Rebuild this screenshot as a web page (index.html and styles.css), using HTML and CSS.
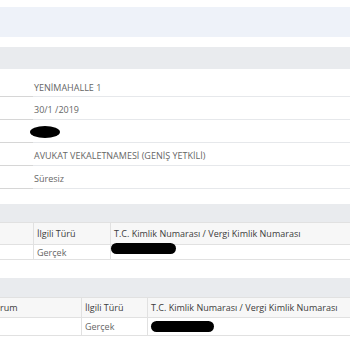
FILE: index.html
```html
<!DOCTYPE html>
<html lang="tr">
<head>
<meta charset="utf-8">
<link rel="stylesheet" href="styles.css">
</head>
<body>
<div class="page">
  <div class="band-blue"></div>
  <div class="band-gray band-first"></div>
  <table class="details">
    <tr class="first"><td class="label"></td><td class="value">YENİMAHALLE 1</td></tr>
    <tr><td class="label"></td><td class="value">30/1 /2019</td></tr>
    <tr><td class="label"></td><td class="value"><span class="redact redact-sm"></span></td></tr>
    <tr><td class="label"></td><td class="value">AVUKAT VEKALETNAMESİ (GENİŞ YETKİLİ)</td></tr>
    <tr><td class="label"></td><td class="value">Süresiz</td></tr>
  </table>
  <div class="band-gray band-second"></div>
  <table class="grid grid-one">
    <tr class="head"><th class="c1"></th><th class="c2">İlgili Türü</th><th>T.C. Kimlik Numarası / Vergi Kimlik Numarası</th></tr>
    <tr class="data"><td class="c1"></td><td class="c2">Gerçek</td><td><span class="redact redact-lg"></span></td></tr>
  </table>
  <div class="band-gray band-third"></div>
  <table class="grid grid-two">
    <tr class="head"><th class="c1 clip">rum</th><th class="c2">İlgili Türü</th><th>T.C. Kimlik Numarası / Vergi Kimlik Numarası</th></tr>
    <tr class="data"><td class="c1"></td><td class="c2">Gerçek</td><td><span class="redact redact-lg2"></span></td></tr>
  </table>
</div>
</body>
</html>
```
FILE: styles.css
```css
html, body {
  margin: 0;
  padding: 0;
  background: #ffffff;
}
.page {
  font-family: "Open Sans", "Liberation Sans", sans-serif;
  font-size: 9px;
  color: #666666;
  padding-top: 7px;
  width: 350px;
  overflow: hidden;
}
.band-blue {
  height: 30px;
  background: #eef2f9;
  margin-bottom: 10px;
}
.band-gray {
  background: #e9ebee;
}
.band-first { height: 22px; }
.band-second { height: 18px; margin-top: 15px; }
.band-third { height: 19px; margin-top: 18px; }
table {
  border-collapse: collapse;
  width: 100%;
}
.details {
  margin-top: 5px;
}
.details td {
  height: 20px;
  padding: 2px 0 0 0;
  vertical-align: middle;
}
.details .first td {
  height: 17px;
  padding-top: 5px;
}
.details .label {
  width: 33px;
  border-bottom: 1px solid #d6d6d6;
}
.details .value {
  padding-left: 1px;
  border-bottom: 1px solid #e6e8eb;
}
.grid th, .grid td {
  text-align: left;
  padding: 0 3px;
  border: 1px solid #e1e1e1;
  white-space: nowrap;
  vertical-align: middle;
}
.grid th {
  font-weight: 500;
  color: #3c3c3c;
  background: #f7f7f7;
}
.grid th:first-child, .grid td:first-child { border-left: none; }
.grid th:last-child, .grid td:last-child { border-right: none; }
.grid-one .head th { height: 21px; }
.grid-one .data td { height: 14px; }
.grid-one .c1 { width: 27px; }
.grid-one .c2 { width: 70px; }
.grid-two .head th { height: 19px; }
.grid-two .data td { height: 17px; }
.grid-two .c1 { width: 75px; }
.grid-two .c2 { width: 59px; }
.grid-two .clip { padding-left: 0; }
.redact {
  display: inline-block;
  background: #000;
  border-radius: 50%;
  vertical-align: middle;
}
.redact-sm {
  width: 30px;
  height: 12px;
  margin-left: -4px;
  margin-top: -2px;
}
.redact-lg {
  width: 65px;
  height: 11px;
  border-radius: 6px;
  margin-top: -9px;
  margin-left: -3px;
}
.redact-lg2 {
  width: 63px;
  height: 11px;
  border-radius: 6px;
  margin-top: -2px;
}
```
